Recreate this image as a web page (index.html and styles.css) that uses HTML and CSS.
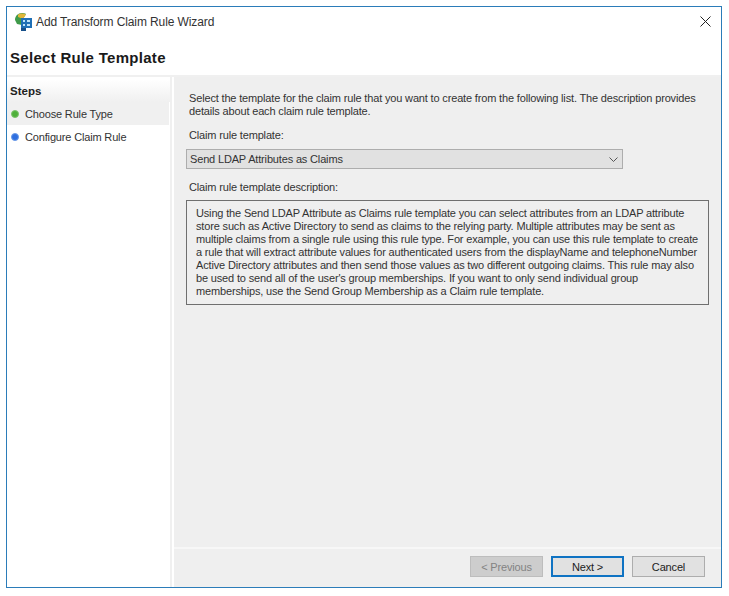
FILE: index.html
```html
<!DOCTYPE html>
<html lang="en">
<head>
<meta charset="utf-8">
<title>Add Transform Claim Rule Wizard</title>
<link rel="stylesheet" href="styles.css">
</head>
<body>
<div class="window">
  <header class="titlebar">
    <svg class="app-icon" width="17" height="18" viewBox="0 0 17 18">
      <path d="M0 7 C0 3 3 0 7 0 C8 0 10 0 11 1 L8 6 L7 12 L2 11 Z" fill="#3f9a4a"/>
      <path d="M3 1.5 C5 0 9 0 11 1.5 L8 6 L3 4 Z" fill="#e0b63a"/>
      <rect x="6" y="5" width="11" height="10" fill="#1f6fb5"/>
      <path d="M8 7h2v2H8zM12 7h3v2h-3zM8 11h2v2H8zM12 11h3v2h-3z" fill="#bfe3f7"/>
      <rect x="6" y="15" width="5" height="3" fill="#164f8a"/>
    </svg>
    <span class="title-text">Add Transform Claim Rule Wizard</span>
    <svg class="close-icon" width="11" height="11" viewBox="0 0 11 11"><path d="M0.5 0.5L10.5 10.5M10.5 0.5L0.5 10.5" stroke="#222" stroke-width="1" fill="none"/></svg>
  </header>
  <div class="page-heading">Select Rule Template</div>
  <div class="body">
    <aside class="sidebar">
      <div class="steps-head">Steps</div>
      <div class="step step-current"><span class="dot dot-green"></span>Choose Rule Type</div>
      <div class="step"><span class="dot dot-blue"></span>Configure Claim Rule</div>
    </aside>
    <div class="main">
      <div class="content">
        <p class="intro">Select the template for the claim rule that you want to create from the following list. The description provides<br>details about each claim rule template.</p>
        <div class="label label-template">Claim rule template:</div>
        <div class="select">
          <span>Send LDAP Attributes as Claims</span>
          <svg class="chevron" width="9" height="5" viewBox="0 0 9 5"><path d="M0.5 0.5L4.5 4.5L8.5 0.5" stroke="#555" fill="none"/></svg>
        </div>
        <div class="label label-desc">Claim rule template description:</div>
        <div class="desc">Using the Send LDAP Attribute as Claims rule template you can select attributes from an LDAP attribute<br>store such as Active Directory to send as claims to the relying party. Multiple attributes may be sent as<br>multiple claims from a single rule using this rule type. For example, you can use this rule template to create<br>a rule that will extract attribute values for authenticated users from the displayName and telephoneNumber<br>Active Directory attributes and then send those values as two different outgoing claims. This rule may also<br>be used to send all of the user's group memberships. If you want to only send individual group<br>memberships, use the Send Group Membership as a Claim rule template.</div>
      </div>
      <footer class="footer">
        <div class="btn btn-disabled">&lt; Previous</div>
        <div class="btn btn-default">Next &gt;</div>
        <div class="btn">Cancel</div>
      </footer>
    </div>
  </div>
</div>
</body>
</html>
```
FILE: styles.css
```css
* { box-sizing: border-box; }
html, body { margin: 0; padding: 0; background: #fff; }
body {
  width: 729px;
  height: 596px;
  padding: 6px 7px 8px 6px;
  font-family: "Liberation Sans", Arial, sans-serif;
  font-size: 11px;
  letter-spacing: -0.16px;
  color: #222;
  overflow: hidden;
}
.window {
  height: 582px;
  border: 1px solid #2b7cb9;
  background: #fff;
  display: flex;
  flex-direction: column;
}
.titlebar {
  height: 29px;
  display: flex;
  align-items: center;
  padding-left: 8px;
  padding-right: 8px;
  flex: none;
}
.app-icon { flex: none; }
.title-text { margin-left: 4px; font-size: 12px; letter-spacing: -0.1px; color: #333; }
.close-icon { margin-left: auto; margin-right: 2px; }
.page-heading {
  height: 41px;
  flex: none;
  padding: 13px 0 0 3px;
  font-size: 15px;
  font-weight: bold;
  letter-spacing: 0.3px;
  color: #1a1a1a;
  border-bottom: 2px solid #f0f0f0;
}
.body { flex: 1; display: flex; min-height: 0; }
.sidebar {
  width: 165px;
  flex: none;
  border-right: 2px solid #f0f0f0;
  background: #fff;
  padding-top: 2px;
}
.steps-head {
  height: 23px;
  padding: 6px 0 0 3px;
  font-weight: bold;
  font-size: 11.5px;
  letter-spacing: 0;
  background: linear-gradient(#fff, #f0f0f0);
}
.step {
  height: 23px;
  display: flex;
  align-items: center;
  padding-left: 4px;
  color: #333;
}
.step-current { background: #f0f0f0; margin-right: 1px; }
.dot { width: 8px; height: 8px; border-radius: 50%; margin-right: 6px; flex: none; }
.dot-green { background: #4fb03a; border: 1px solid #7cc46c; }
.dot-blue { background: #2f6fe0; border: 1px solid #6a9ae8; }
.main {
  flex: 1;
  margin-left: 2px;
  background: #efefef;
  display: flex;
  flex-direction: column;
  min-width: 0;
}
.content { flex: 1; padding: 15px 12px 0 15px; }
.intro { margin: 0; line-height: 13px; white-space: nowrap; color: #333; }
.label { line-height: 14px; color: #333; }
.label-template { margin-top: 10px; }
.select {
  width: 437px;
  height: 20px;
  margin: 7px 0 0 -3px;
  background: #e1e1e1;
  border: 1px solid #adadad;
  display: flex;
  align-items: center;
  justify-content: space-between;
  padding: 0 2px 0 3px;
  color: #333;
}
.chevron { margin-right: 2px; }
.label-desc { margin-top: 11px; margin-left: 0; }
.desc {
  width: 523px;
  height: 105px;
  margin: 6px 0 0 -3px;
  border: 1px solid #6f6f6f;
  padding: 6px 0 0 9px;
  line-height: 13px;
  white-space: nowrap;
  color: #333;
}
.footer {
  height: 40px;
  flex: none;
  border-top: 2px solid #f7f7f7;
  display: flex;
  justify-content: flex-end;
  gap: 8px;
  padding: 7px 16px 0 0;
}
.btn {
  width: 73px;
  height: 21px;
  background: #e1e1e1;
  border: 1px solid #adadad;
  display: flex;
  align-items: center;
  justify-content: center;
  color: #222;
}
.btn-disabled { background: #cdcdcd; border-color: #bdbdbd; color: #838383; }
.btn-default { border: 2px solid #0f73c3; background: #e1e1e1; }
```
